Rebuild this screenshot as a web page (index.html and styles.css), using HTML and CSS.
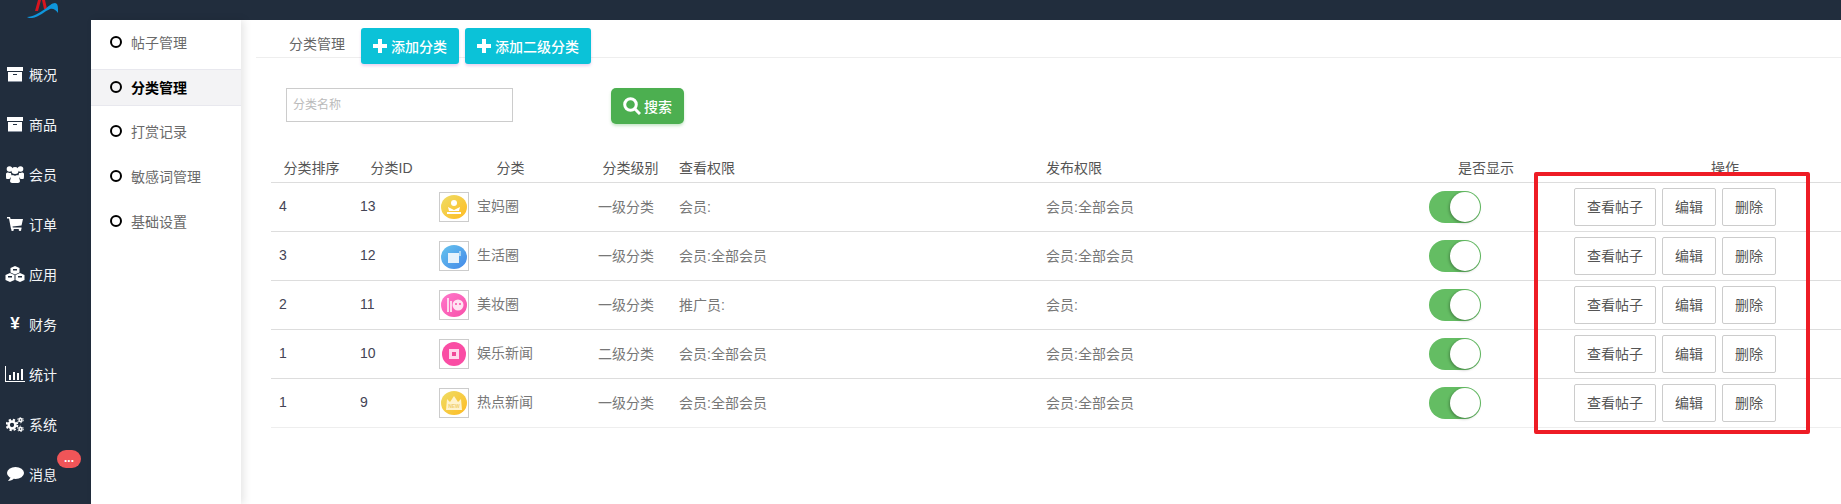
FILE: index.html
```html
<!DOCTYPE html>
<html lang="zh-CN">
<head>
    <meta charset="UTF-8">
    <meta name="viewport" content="width=device-width, initial-scale=1.0">
    <title>分类管理</title>
    <link rel="stylesheet" href="styles.css">
</head>
<body>
    <header class="topbar">
        <svg class="logo" viewBox="0 0 32 18" width="32" height="18">
            <path d="M8 11 11 0h3L11 11zM15 0h3l2 9h-3z" fill="#d8141f"/>
            <path d="M0 17C6 17 12 13 18 9 22 6 25 3 28 3c2 0 3 2 3 6v4c-2-3-5-5-8-4-5 2-11 8-18 9-2 0-4 0-5-1z" fill="#0f96dc"/>
        </svg>
    </header>

    <div class="layout">
        <nav class="sidebar">
            <a class="nav-item">
                <span class="nav-icon">
                    <svg viewBox="0 0 16 15" width="16" height="15"><path d="M0 0h16v4H0z" fill="#fff"/><path d="M1 5h14v9H1z" fill="#fff"/><path d="M6 7h4v1H6z" fill="#212d3d"/><path d="M1 14h14v1H1z" fill="#8b93a0"/></svg>
                </span>
                概况
            </a>
            <a class="nav-item">
                <span class="nav-icon">
                    <svg viewBox="0 0 16 15" width="16" height="15"><path d="M0 0h16v4H0z" fill="#fff"/><path d="M1 5h14v9H1z" fill="#fff"/><path d="M6 7h4v1H6z" fill="#212d3d"/><path d="M1 14h14v1H1z" fill="#8b93a0"/></svg>
                </span>
                商品
            </a>
            <a class="nav-item">
                <span class="nav-icon">
                    <svg viewBox="0 0 18 17" width="18" height="17" fill="#fff"><circle cx="3.500" cy="3" r="2.800"/><circle cx="14.500" cy="3" r="2.800"/><circle cx="9" cy="4.500" r="3.600"/><path d="M0 8c0-1 1-1.500 2-1.500 1 .5 2 .5 3 .5 0 2 1 3 2 3.500-2 .5-3 1.500-3.500 2.500H1C0 13 0 12 0 8zM18 8c0-1-1-1.500-2-1.500-1 .5-2 .5-3 .5 0 2-1 3-2 3.500 2 .5 3 1.500 3.500 2.500H17c1 0 1-1 1-5z"/><path d="M5 11c0-1 1-2 2-2 1 1 3 1 4 0 1 0 2 1 2 2l1 4c0 1-1 2-2 2H6c-1 0-2-1-2-2z"/></svg>
                </span>
                会员
            </a>
            <a class="nav-item">
                <span class="nav-icon">
                    <svg viewBox="0 0 16 14" width="16" height="14" fill="#fff"><path d="M0 0h3l.6 2H16l-1.500 6.500-9 1 .3 1H14.500V12H4L2 1.500H0z"/><circle cx="5.500" cy="12.700" r="1.300"/><circle cx="13" cy="12.700" r="1.300"/></svg>
                </span>
                订单
            </a>
            <a class="nav-item">
                <span class="nav-icon">
                    <svg viewBox="0 0 20 16" width="20" height="16"><path d="M10 0l4.500 2v4.500L10 8.500 5.500 6.500V2zM5 7l4.500 2v5L5 16 .5 14V9zM15 7l4.500 2v5L15 16l-4.500-2V9z" fill="#fff"/><path d="M8 3h4v1.500H8zM3 10h4v1.500H3zM13 10h4v1.500h-4z" fill="#212d3d"/></svg>
                </span>
                应用
            </a>
            <a class="nav-item">
                <span class="nav-icon yen">¥</span>
                财务
            </a>
            <a class="nav-item">
                <span class="nav-icon">
                    <svg viewBox="0 0 20 16" width="20" height="16" fill="#fff"><path d="M0 0h1v15h19v1H0z"/><path d="M4 9h2v5H4zM8 6h2v8H8zM12 7h2v7h-2zM16 3h2v11h-2z"/></svg>
                </span>
                统计
            </a>
            <a class="nav-item">
                <span class="nav-icon">
                    <svg viewBox="0 0 18 15" width="18" height="15" fill="none" stroke="#fff"><circle cx="6" cy="8" r="3.400" stroke-width="2.500"/><circle cx="6" cy="8" r="5.300" stroke-width="2" stroke-dasharray="2.200 2"/><circle cx="14.500" cy="3" r="1.500" stroke-width="1.500"/><circle cx="14.500" cy="12" r="1.500" stroke-width="1.500"/><circle cx="14.500" cy="3" r="2.800" stroke-width="1" stroke-dasharray="1.500 1.500"/><circle cx="14.500" cy="12" r="2.800" stroke-width="1" stroke-dasharray="1.500 1.500"/></svg>
                </span>
                系统
            </a>
            <a class="nav-item">
                <span class="nav-icon">
                    <svg viewBox="0 0 17 14" width="17" height="14" fill="#fff"><ellipse cx="8.500" cy="6" rx="8.500" ry="6"/><path d="M4 10l-3 4c2 0 5-1 6-2.500z"/></svg>
                </span>
                消息
                <span class="nav-badge">...</span>
            </a>
        </nav>

        <aside class="submenu">
            <a class="sub-item"><i class="ring"></i>帖子管理</a>
            <a class="sub-item active"><i class="ring"></i>分类管理</a>
            <a class="sub-item"><i class="ring"></i>打赏记录</a>
            <a class="sub-item"><i class="ring"></i>敏感词管理</a>
            <a class="sub-item"><i class="ring"></i>基础设置</a>
        </aside>

        <main class="content">
            <div class="tabs">
                <span class="tab-title">分类管理</span>
                <button class="btn btn-cyan">
                    <svg viewBox="0 0 14 14" width="14" height="14"><path d="M5 0h4v5h5v4H9v5H5V9H0V5h5z" fill="#fff"/></svg>添加分类
                </button>
                <button class="btn btn-cyan">
                    <svg viewBox="0 0 14 14" width="14" height="14"><path d="M5 0h4v5h5v4H9v5H5V9H0V5h5z" fill="#fff"/></svg>添加二级分类
                </button>
            </div>

            <div class="search-row">
                <input class="search-input" type="text" placeholder="分类名称">
                <button class="btn btn-green">
                    <svg viewBox="0 0 18 18" width="18" height="18" fill="none" stroke="#fff"><circle cx="7.500" cy="7.500" r="5.800" stroke-width="3"/><path d="M12 12l5 5" stroke-width="3"/></svg>搜索
                </button>
            </div>

            <table class="cat-table">
                <colgroup>
                    <col class="c-sort"><col class="c-id"><col class="c-name"><col class="c-level">
                    <col class="c-view"><col class="c-post"><col class="c-show"><col class="c-ops">
                </colgroup>
                <thead>
                    <tr>
                        <th>分类排序</th>
                        <th>分类ID</th>
                        <th>分类</th>
                        <th>分类级别</th>
                        <th class="left">查看权限</th>
                        <th class="left">发布权限</th>
                        <th>是否显示</th>
                        <th class="ops-head">操作</th>
                    </tr>
                </thead>
                <tbody>
                    <tr>
                        <td class="num">4</td>
                        <td class="num">13</td>
                        <td class="box"><div class="cat-name"><span class="thumb">
                            <svg viewBox="0 0 28 28" width="28" height="28"><defs><linearGradient id="gold" x1="0" y1="0" x2="1" y2="1"><stop offset="0" stop-color="#eedd66"/><stop offset="1" stop-color="#ffbb22"/></linearGradient></defs><ellipse cx="14" cy="14" rx="13" ry="12" fill="url(#gold)"/><circle cx="14" cy="10" r="3" fill="#fff"/><path d="M8 14l6 3 6-3-1 4H9zM7 19h14v2H7z" fill="#fff"/></svg>
                        </span>宝妈圈</div></td>
                        <td>一级分类</td>
                        <td>会员:</td>
                        <td>会员:全部会员</td>
                        <td class="box"><span class="switch"><i></i></span></td>
                        <td class="box ops"><button class="op">查看帖子</button><button class="op">编辑</button><button class="op">删除</button></td>
                    </tr>
                    <tr>
                        <td class="num">3</td>
                        <td class="num">12</td>
                        <td class="box"><div class="cat-name"><span class="thumb">
                            <svg viewBox="0 0 28 28" width="28" height="28"><defs><linearGradient id="blue" x1="0" y1="0" x2="1" y2="1"><stop offset="0" stop-color="#66c4ee"/><stop offset="1" stop-color="#4488e8"/></linearGradient></defs><ellipse cx="14" cy="15" rx="13" ry="12" fill="url(#blue)"/><path d="M8 11h11v10H8z" fill="#e6f2fc"/><path d="M19 9h2v5h-2z" fill="#a8d4f4"/></svg>
                        </span>生活圈</div></td>
                        <td>一级分类</td>
                        <td>会员:全部会员</td>
                        <td>会员:全部会员</td>
                        <td class="box"><span class="switch"><i></i></span></td>
                        <td class="box ops"><button class="op">查看帖子</button><button class="op">编辑</button><button class="op">删除</button></td>
                    </tr>
                    <tr>
                        <td class="num">2</td>
                        <td class="num">11</td>
                        <td class="box"><div class="cat-name"><span class="thumb">
                            <svg viewBox="0 0 28 28" width="28" height="28"><defs><linearGradient id="pink" x1="0" y1="0" x2="1" y2="1"><stop offset="0" stop-color="#ff78cc"/><stop offset="1" stop-color="#f84fa8"/></linearGradient></defs><ellipse cx="14" cy="14" rx="13" ry="12" fill="url(#pink)"/><path d="M7 7h2v14H7zM10 10h2v11h-2z" fill="#ffd8ee"/><circle cx="18" cy="14" r="5.500" fill="#ffe4f2"/><circle cx="16" cy="13" r="1" fill="#f84fa8"/><circle cx="20" cy="13" r="1" fill="#f84fa8"/></svg>
                        </span>美妆圈</div></td>
                        <td>一级分类</td>
                        <td>推广员:</td>
                        <td>会员:</td>
                        <td class="box"><span class="switch"><i></i></span></td>
                        <td class="box ops"><button class="op">查看帖子</button><button class="op">编辑</button><button class="op">删除</button></td>
                    </tr>
                    <tr>
                        <td class="num">1</td>
                        <td class="num">10</td>
                        <td class="box"><div class="cat-name"><span class="thumb">
                            <svg viewBox="0 0 28 28" width="28" height="28"><circle cx="14" cy="14" r="12" fill="#fa4da4"/><path d="M9 9h10v10H9z" fill="#ffd6ec"/><path d="M12 12h4v4h-4z" fill="#f04898"/></svg>
                        </span>娱乐新闻</div></td>
                        <td>二级分类</td>
                        <td>会员:全部会员</td>
                        <td>会员:全部会员</td>
                        <td class="box"><span class="switch"><i></i></span></td>
                        <td class="box ops"><button class="op">查看帖子</button><button class="op">编辑</button><button class="op">删除</button></td>
                    </tr>
                    <tr class="last">
                        <td class="num">1</td>
                        <td class="num">9</td>
                        <td class="box"><div class="cat-name"><span class="thumb">
                            <svg viewBox="0 0 28 28" width="28" height="28"><defs><linearGradient id="gold2" x1="0" y1="0" x2="1" y2="1"><stop offset="0" stop-color="#eedd66"/><stop offset="1" stop-color="#ffbb22"/></linearGradient></defs><ellipse cx="14" cy="14" rx="13" ry="12" fill="url(#gold2)"/><path d="M7 10l3 3 4-6 4 6 3-3 1 11H6z" fill="#fff3cc"/><text x="14" y="19" font-size="5" font-weight="bold" text-anchor="middle" fill="#f0d070">NEW</text></svg>
                        </span>热点新闻</div></td>
                        <td>一级分类</td>
                        <td>会员:全部会员</td>
                        <td>会员:全部会员</td>
                        <td class="box"><span class="switch"><i></i></span></td>
                        <td class="box ops"><button class="op">查看帖子</button><button class="op">编辑</button><button class="op">删除</button></td>
                    </tr>
                </tbody>
            </table>

            <div class="red-mark"></div>
        </main>
    </div>
</body>
</html>
```

FILE: styles.css
```css
/* Base */
html, body {
    height: 100%;
}

body {
    margin: 0;
    display: flex;
    flex-direction: column;
    overflow: hidden;
    background: #fff;
    font-family: "Liberation Sans", "Noto Sans CJK SC", sans-serif;
    font-size: 14px;
    color: #666;
}

button {
    font-family: inherit;
}

/* Top bar */
.topbar {
    height: 20px;
    flex: none;
    background: #212d3d;
    padding-left: 27px;
}

.logo {
    display: block;
}

.layout {
    flex: 1;
    display: flex;
    min-height: 0;
}

/* Left nav */
.sidebar {
    width: 91px;
    flex: none;
    box-sizing: border-box;
    padding-top: 30px;
    background: #212d3d;
    color: #f2f4f6;
}

.nav-item {
    position: relative;
    height: 50px;
    box-sizing: border-box;
    padding: 0 0 2px 5px;
    display: flex;
    align-items: center;
    gap: 4px;
}

.nav-icon {
    width: 20px;
    height: 20px;
    display: flex;
    align-items: center;
    justify-content: center;
    color: #fff;
}

.nav-icon.yen {
    font-size: 17px;
    font-weight: bold;
}

.nav-badge {
    position: absolute;
    left: 57px;
    top: 0;
    width: 24px;
    height: 18px;
    border-radius: 9px;
    background: #f05558;
    color: #fff;
    font-size: 12px;
    font-weight: bold;
    line-height: 16px;
    text-align: center;
}

/* Second column */
.submenu {
    width: 150px;
    flex: none;
    box-sizing: border-box;
    padding-top: 5px;
    background: #fff;
    box-shadow: 3px 0 8px rgba(0, 0, 0, 0.1);
    z-index: 1;
}

.sub-item {
    height: 35px;
    box-sizing: border-box;
    margin-bottom: 10px;
    padding: 0 0 2px 19px;
    display: flex;
    align-items: center;
    color: #6a6a6a;
}

.sub-item.active {
    margin-bottom: 9px;
    background: #f3f3f5;
    box-shadow: 0 -1px 0 #e8e8ee, 0 1px 0 #e8e8ee;
    color: #000;
    font-weight: bold;
}

.ring {
    width: 8px;
    height: 8px;
    margin-right: 9px;
    border: 2px solid #000;
    border-radius: 50%;
}

/* Content */
.content {
    position: relative;
    flex: 1;
    min-width: 0;
}

.tabs {
    height: 37px;
    margin-left: 15px;
    padding-left: 33px;
    display: flex;
    align-items: flex-start;
    gap: 6px;
    border-bottom: 1px solid #eee;
}

.tab-title {
    margin-top: 13px;
    margin-right: 10px;
    color: #666;
}

.btn {
    height: 36px;
    display: flex;
    align-items: center;
    border: none;
    border-radius: 3px;
    color: #fff;
    font-size: 14px;
    font-weight: 500;
    white-space: nowrap;
}

.btn-cyan {
    margin-top: 8px;
    padding: 0 12px;
    gap: 4px;
    background: #0bc2d8;
    box-shadow: 0 2px 3px rgba(156, 39, 176, 0.2);
}

.btn-green {
    padding: 0 12px;
    gap: 3px;
    border-radius: 5px;
    background: #4caf50;
    box-shadow: 0 2px 3px rgba(76, 175, 80, 0.3);
}

.search-row {
    margin: 30px 0 0 45px;
    display: flex;
    gap: 98px;
}

.search-input {
    width: 227px;
    height: 34px;
    box-sizing: border-box;
    padding: 0 6px;
    border: 1px solid #ccc;
    font-family: inherit;
    font-size: 12px;
}

.search-input::placeholder {
    color: #bbb;
}

/* Table */
.cat-table {
    width: 1570px;
    margin: 30px 0 0 30px;
    table-layout: fixed;
    border-collapse: collapse;
}

.c-sort { width: 81px; }
.c-id { width: 79px; }
.c-name { width: 159px; }
.c-level { width: 81px; }
.c-view { width: 367px; }
.c-post { width: 383px; }
.c-show { width: 130px; }
.c-ops { width: 290px; }

.cat-table th {
    height: 28px;
    box-sizing: border-box;
    padding: 0 0 2px;
    border-bottom: 1px solid #ddd;
    color: #555;
    font-weight: normal;
    text-align: center;
    vertical-align: middle;
}

.cat-table th.left {
    padding-left: 8px;
    text-align: left;
}

.cat-table th.ops-head {
    padding-left: 58px;
}

.cat-table td {
    height: 49px;
    box-sizing: border-box;
    padding: 0 8px 2px;
    border-bottom: 1px solid #ddd;
    color: #777;
    vertical-align: middle;
    white-space: nowrap;
}

.cat-table td.box {
    padding-bottom: 0;
}

.cat-table tr.last td {
    border-bottom-color: #eee;
}

.cat-table td.num {
    color: #445;
}

.cat-name {
    display: flex;
    align-items: center;
    gap: 8px;
    line-height: 17px;
}

.thumb {
    width: 30px;
    height: 30px;
    box-sizing: border-box;
    border: 1px solid #ccc;
    display: block;
}

.thumb svg {
    display: block;
}

.switch {
    display: block;
    position: relative;
    width: 52px;
    height: 32px;
    box-sizing: border-box;
    border-radius: 16px;
    background: #64bd63;
}

.switch i {
    position: absolute;
    top: 1px;
    right: 1px;
    width: 30px;
    height: 30px;
    border-radius: 50%;
    background: #fff;
    box-shadow: -1px 1px 3px rgba(0, 0, 0, 0.3);
}

.cat-table td.ops {
    padding-left: 23px;
}

.op {
    height: 38px;
    margin-right: 6px;
    padding: 0 12px 2px;
    box-sizing: border-box;
    border: 1px solid #ccc;
    border-radius: 2px;
    background: #fff;
    color: #555;
    font-size: 14px;
    vertical-align: middle;
}

/* Red annotation drawn on top of the screenshot */
.red-mark {
    position: absolute;
    left: 1293px;
    top: 152px;
    width: 276px;
    height: 262px;
    box-sizing: border-box;
    border: 4px solid #ee1c25;
    border-radius: 2px;
}
```
